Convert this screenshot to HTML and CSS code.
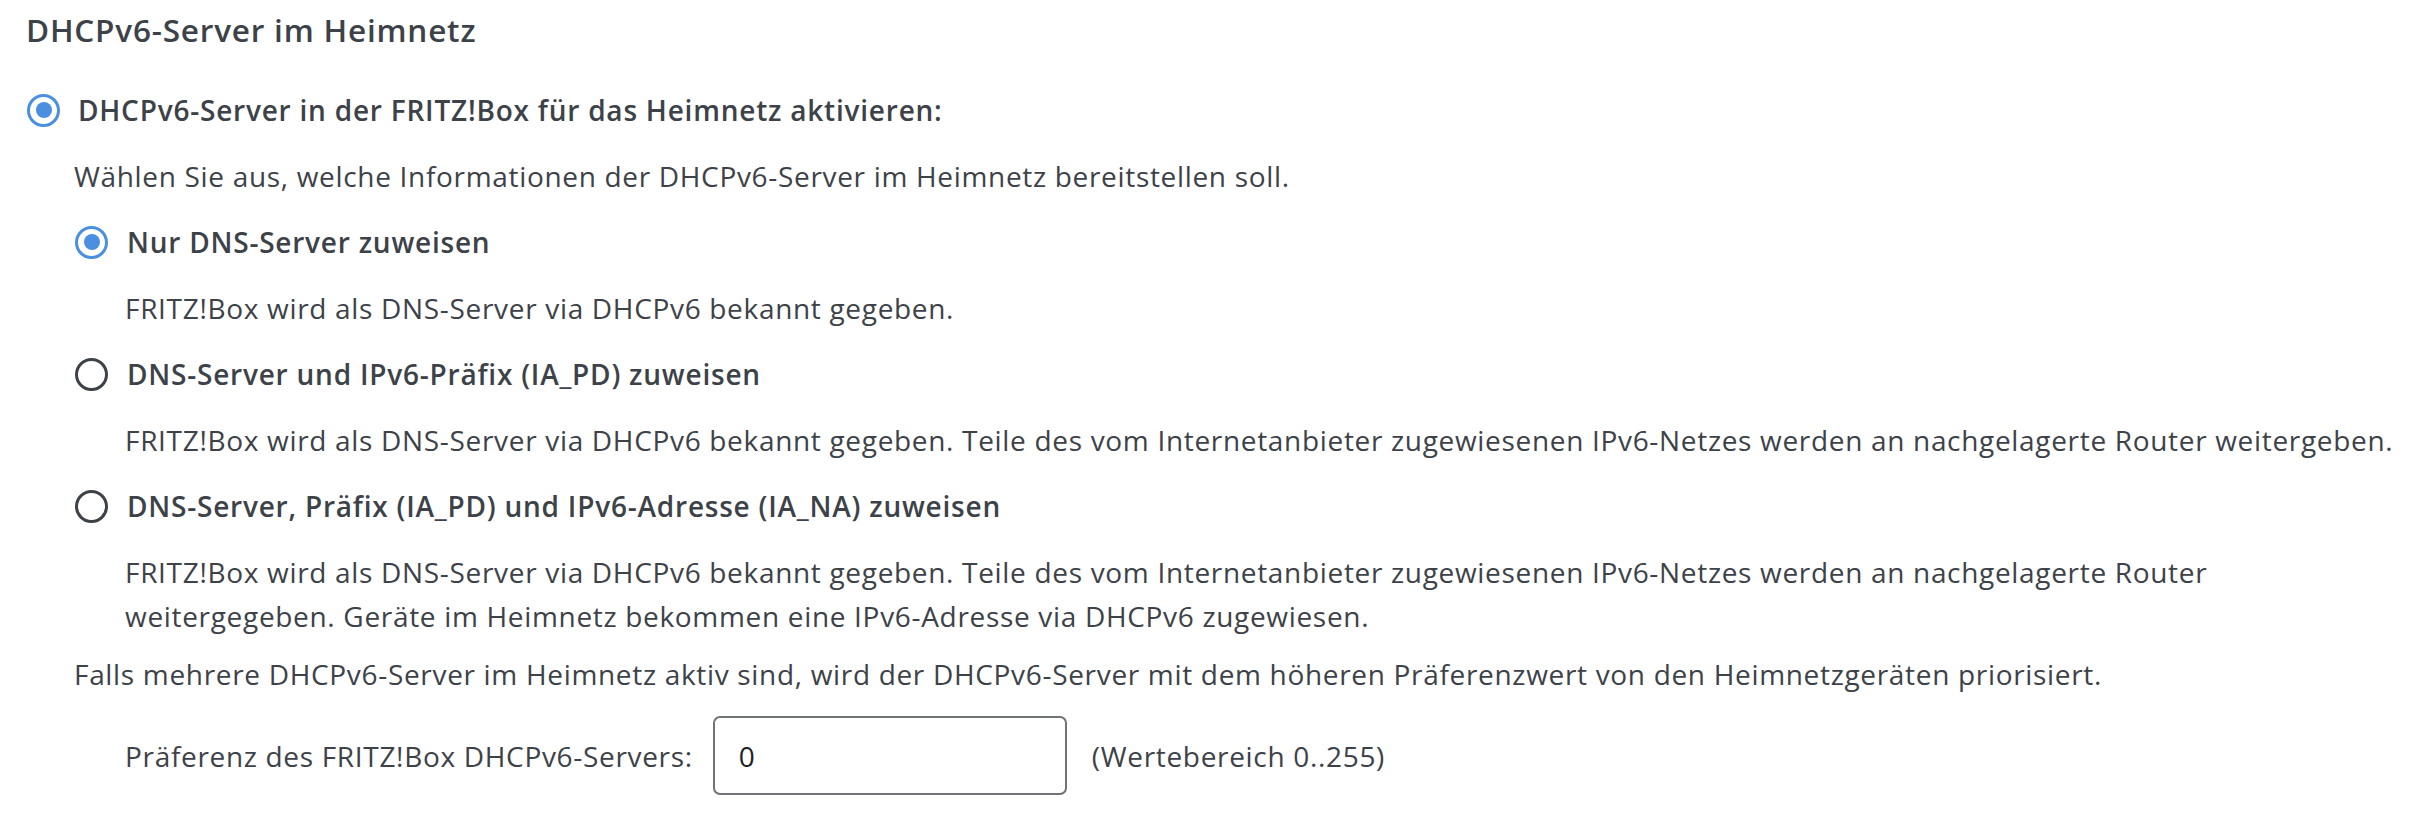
FILE: index.html
```html
<!DOCTYPE html>
<html lang="de">
<head>
<meta charset="utf-8">
<title>DHCPv6-Server im Heimnetz</title>
<link rel="stylesheet" href="styles.css">
</head>
<body>
<div class="page">
  <h2 class="heading">DHCPv6-Server im Heimnetz</h2>
  <div class="radio-row top">
    <span class="radio checked"></span>
    <span class="label">DHCPv6-Server in der FRITZ!Box für das Heimnetz aktivieren:</span>
  </div>
  <div class="section">
    <p class="text">Wählen Sie aus, welche Informationen der DHCPv6-Server im Heimnetz bereitstellen soll.</p>
    <div class="radio-row">
      <span class="radio checked"></span>
      <span class="label">Nur DNS-Server zuweisen</span>
    </div>
    <p class="desc">FRITZ!Box wird als DNS-Server via DHCPv6 bekannt gegeben.</p>
    <div class="radio-row">
      <span class="radio"></span>
      <span class="label">DNS-Server und IPv6-Präfix (IA_PD) zuweisen</span>
    </div>
    <p class="desc">FRITZ!Box wird als DNS-Server via DHCPv6 bekannt gegeben. Teile des vom Internetanbieter zugewiesenen IPv6-Netzes werden an nachgelagerte Router weitergeben.</p>
    <div class="radio-row">
      <span class="radio"></span>
      <span class="label">DNS-Server, Präfix (IA_PD) und IPv6-Adresse (IA_NA) zuweisen</span>
    </div>
    <p class="desc">FRITZ!Box wird als DNS-Server via DHCPv6 bekannt gegeben. Teile des vom Internetanbieter zugewiesenen IPv6-Netzes werden an nachgelagerte Router weitergegeben. Geräte im Heimnetz bekommen eine IPv6-Adresse via DHCPv6 zugewiesen.</p>
    <p class="text falls">Falls mehrere DHCPv6-Server im Heimnetz aktiv sind, wird der DHCPv6-Server mit dem höheren Präferenzwert von den Heimnetzgeräten priorisiert.</p>
    <div class="pref-row">
      <label class="pref-label" for="pref">Präferenz des FRITZ!Box DHCPv6-Servers:</label>
      <input class="pref-input" id="pref" type="text" value="0">
      <span class="range">(Wertebereich 0..255)</span>
    </div>
  </div>
</div>
</body>
</html>
```
FILE: styles.css
```css
* { box-sizing: border-box; }
html, body { margin: 0; padding: 0; background: #ffffff; }
body {
  font-family: "Open Sans", "Noto Sans", sans-serif;
  font-size: 28px;
  letter-spacing: 0.68px;
  line-height: 44px;
  color: #3d4249;
}
.page { padding: 8px 20px 0 26px; }
.heading {
  margin: 0;
  font-size: 31.5px;
  letter-spacing: 0.8px;
  font-weight: 600;
  line-height: 44px;
  color: #3d4249;
}
.radio-row {
  display: flex;
  align-items: center;
  gap: 19px;
  height: 44px;
  padding-left: 1px;
}
.radio-row.top { margin-top: 36px; gap: 18px; }
.radio {
  flex: none;
  width: 33px;
  height: 33px;
  border-radius: 50%;
  border: 3px solid #3d4249;
  display: flex;
  align-items: center;
  justify-content: center;
  background: #fff;
}
.radio.checked { border-color: #4a8fe0; }
.radio.checked::after {
  content: "";
  width: 16px;
  height: 16px;
  border-radius: 50%;
  background: #4a8fe0;
}
.label { font-weight: 600; letter-spacing: 0.78px; }
.section { margin-left: 48px; }
.section > * { margin: 22px 0 0 0; }
.text { margin: 22px 0 0 0; }
.desc { padding-left: 51px; }
.falls { margin-top: 14px; }
.pref-row {
  display: flex;
  align-items: center;
  padding-left: 51px;
  margin-top: 20px;
}
.pref-label { margin-right: 20px; }
.pref-input {
  width: 354px;
  height: 79px;
  border: 2px solid #6f7277;
  border-radius: 7px;
  padding: 0 0 0 24px;
  font-family: "Open Sans", "Noto Sans", sans-serif;
  font-size: 28px;
  color: #1e2125;
  outline: none;
  background: #fff;
}
.range { margin-left: 25px; }
```
